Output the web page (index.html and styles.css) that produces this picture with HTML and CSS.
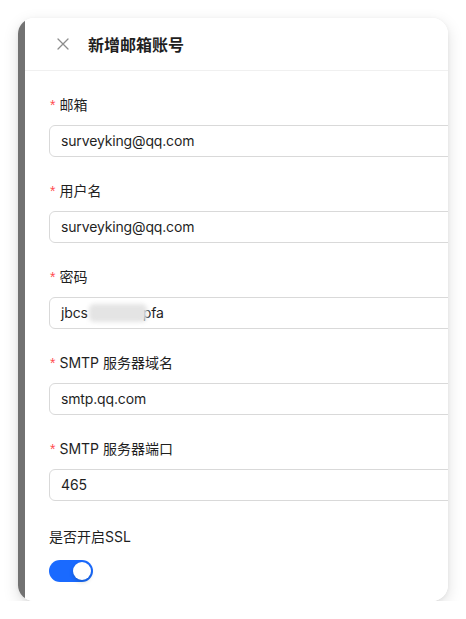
FILE: index.html
```html
<!DOCTYPE html>
<html lang="zh-CN">
<head>
<meta charset="utf-8">
<title>新增邮箱账号</title>
<link rel="stylesheet" href="styles.css">
</head>
<body>
<div class="card">
  <div class="mask"></div>
  <div class="panel">
    <div class="header">
      <svg class="close" width="12" height="12" viewBox="0 0 12 12"><path d="M1 1L11 11M11 1L1 11" stroke="#8c8c8c" stroke-width="1.3" stroke-linecap="round" fill="none"/></svg>
      <span class="title">新增邮箱账号</span>
    </div>
    <div class="form">
      <div class="field">
        <div class="label"><span class="star">*</span>邮箱</div>
        <div class="input">surveyking@qq.com</div>
      </div>
      <div class="field">
        <div class="label"><span class="star">*</span>用户名</div>
        <div class="input">surveyking@qq.com</div>
      </div>
      <div class="field">
        <div class="label"><span class="star">*</span>密码</div>
        <div class="input">jbcs<span class="blur"></span>pfa</div>
      </div>
      <div class="field">
        <div class="label"><span class="star">*</span>SMTP 服务器域名</div>
        <div class="input">smtp.qq.com</div>
      </div>
      <div class="field">
        <div class="label"><span class="star">*</span>SMTP 服务器端口</div>
        <div class="input">465</div>
      </div>
      <div class="field switch-field">
        <div class="label ssl-label">是否开启SSL</div>
        <div class="switch"><span class="knob"></span></div>
      </div>
    </div>
  </div>
</div>
</body>
</html>
```

FILE: styles.css
```css
html, body {
  margin: 0;
  padding: 0;
  background: #ffffff;
}

body {
  font-family: "Inter", "Noto Sans CJK SC", sans-serif;
  color: #1f1f1f;
}

.card {
  margin: 18px 0 0 18px;
  width: 430px;
  height: 583px;
  border-radius: 16px;
  overflow: hidden;
  display: flex;
  box-shadow: 0 5px 16px rgba(0, 0, 0, 0.13), 0 1px 4px rgba(0, 0, 0, 0.06);
}

.mask {
  width: 7px;
  flex: none;
  background: #727272;
}

.panel {
  flex: 1;
  background: #ffffff;
  overflow: hidden;
}

.header {
  height: 52px;
  border-bottom: 1px solid #f0f0f0;
  display: flex;
  align-items: center;
  padding-left: 32px;
  gap: 19px;
}

.close {
  display: block;
  flex: none;
}

.title {
  font-family: "Noto Sans CJK SC", sans-serif;
  font-size: 16px;
  font-weight: 700;
  color: #1f1f1f;
  line-height: 24px;
}

.form {
  padding: 22px 0 0 24px;
}

.field {
  margin-bottom: 22px;
}

.label {
  height: 22px;
  line-height: 22px;
  padding-top: 1px;
  font-size: 14px;
  margin-bottom: 9px;
  white-space: nowrap;
  color: #1f1f1f;
}

.star {
  color: #ff4d4f;
  font-family: "Liberation Sans", sans-serif;
  font-size: 14px;
  margin-right: 4px;
  margin-left: 1px;
}

.input {
  box-sizing: border-box;
  width: 440px;
  height: 32px;
  border: 1px solid #d9d9d9;
  border-radius: 6px;
  padding: 4px 11px;
  font-size: 14px;
  line-height: 22px;
  letter-spacing: -0.15px;
  color: #1f1f1f;
  white-space: nowrap;
}

.blur {
  display: inline-block;
  position: relative;
  width: 58px;
  height: 18px;
  margin: 0 -4px 0 1px;
  vertical-align: -4px;
  background: #e4e4e4;
  border-radius: 5px;
  filter: blur(2px);
}

.switch-field {
  margin-top: 24px;
}

.ssl-label {
  margin-bottom: 12px;
}

.switch {
  width: 44px;
  height: 22px;
  border-radius: 11px;
  background: #1a6aff;
  display: flex;
  justify-content: flex-end;
  align-items: center;
  padding: 0 2px;
  box-sizing: border-box;
}

.knob {
  width: 18px;
  height: 18px;
  border-radius: 50%;
  background: #ffffff;
  box-shadow: 0 2px 4px rgba(0, 35, 11, 0.2);
}
```
